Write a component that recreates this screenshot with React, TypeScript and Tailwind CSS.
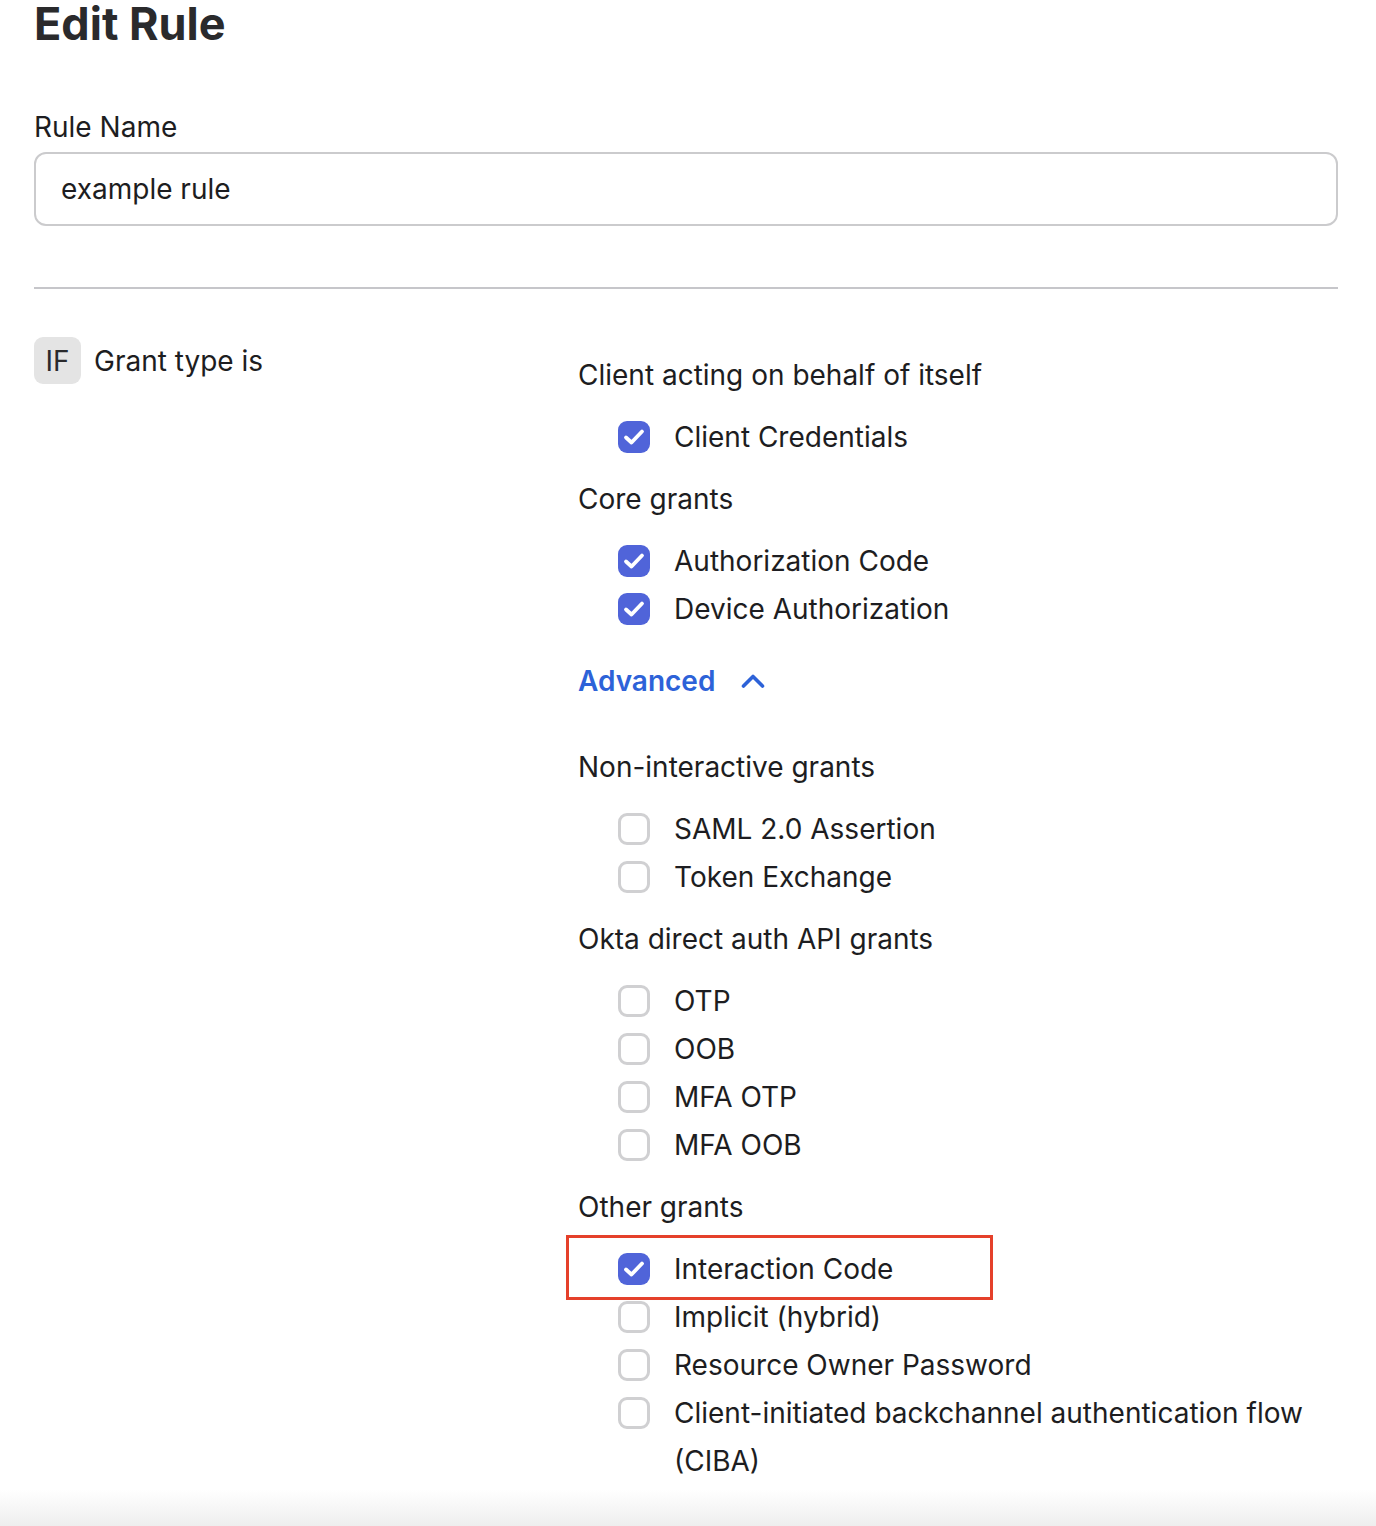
import type { ReactNode } from "react";

type Grant = { label: string; checked?: boolean; highlight?: boolean };

const groupsTop: { title: string; grants: Grant[] }[] = [
  {
    title: "Client acting on behalf of itself",
    grants: [{ label: "Client Credentials", checked: true }],
  },
  {
    title: "Core grants",
    grants: [
      { label: "Authorization Code", checked: true },
      { label: "Device Authorization", checked: true },
    ],
  },
];

const groupsAdvanced: { title: string; grants: Grant[] }[] = [
  {
    title: "Non-interactive grants",
    grants: [{ label: "SAML 2.0 Assertion" }, { label: "Token Exchange" }],
  },
  {
    title: "Okta direct auth API grants",
    grants: [
      { label: "OTP" },
      { label: "OOB" },
      { label: "MFA OTP" },
      { label: "MFA OOB" },
    ],
  },
  {
    title: "Other grants",
    grants: [
      { label: "Interaction Code", checked: true, highlight: true },
      { label: "Implicit (hybrid)" },
      { label: "Resource Owner Password" },
      { label: "Client-initiated backchannel authentication flow (CIBA)" },
    ],
  },
];

function Checkbox({ checked }: { checked?: boolean }) {
  if (checked) {
    return (
      <span className="flex h-[32px] w-[32px] shrink-0 items-center justify-center rounded-[9px] bg-[#5064d9]">
        <svg width="22" height="18" viewBox="0 0 22 18" fill="none" className="-mt-[1px]">
          <path
            d="M3 9.5 L8.5 14.5 L19 3.5"
            stroke="white"
            strokeWidth="3.8"
            strokeLinecap="round"
            strokeLinejoin="round"
          />
        </svg>
      </span>
    );
  }
  return (
    <span className="block h-[32px] w-[32px] shrink-0 rounded-[9px] border-[3px] border-[#d0d0d2] bg-white" />
  );
}

function GrantRow({ grant }: { grant: Grant }) {
  return (
    <div className="relative flex items-start pl-[40px]">
      <div className="flex h-[48px] items-center">
        <Checkbox checked={grant.checked} />
      </div>
      <span className="ml-[24px] leading-[48px]">{grant.label}</span>
      {grant.highlight && (
        <div className="pointer-events-none absolute left-[-12px] top-[-10px] h-[65px] w-[427px] border-[3px] border-[#e5402a]" />
      )}
    </div>
  );
}

function Group({ title, children }: { title: string; children: ReactNode }) {
  return (
    <div className="flex flex-col">
      <p className="mb-[14px] leading-[48px]">{title}</p>
      {children}
    </div>
  );
}

export default function App() {
  return (
    <div className="min-h-[1526px] bg-white font-['Inter',sans-serif] text-[28px] text-[#1d1d21]">
      <div className="px-[34px] pr-[38px]">
        <h1 className="text-[45px] font-bold leading-[48px] text-[#2a2a2c]">Edit Rule</h1>

        <label className="mt-[59px] block leading-[40px]">Rule Name</label>
        <div className="mt-[5px] flex h-[74px] items-center rounded-[12px] border-2 border-[#cbcbcd] px-[25px]">
          example rule
        </div>

        <div className="mt-[61px] h-[2px] bg-[#c6c6ca]" />

        <div className="mt-[48px] grid grid-cols-[544px_1fr]">
          <div className="flex items-center gap-[13px] self-start">
            <span className="flex h-[47px] w-[47px] items-center justify-center rounded-[9px] bg-[#e4e4e4] text-[#2a2a2c]">
              IF
            </span>
            <span>Grant type is</span>
          </div>

          <div className="flex flex-col gap-[14px] pt-[14px]">
            {groupsTop.map((g) => (
              <Group key={g.title} title={g.title}>
                {g.grants.map((gr) => (
                  <GrantRow key={gr.label} grant={gr} />
                ))}
              </Group>
            ))}

            <button className="mt-[10px] flex h-[48px] items-center gap-[26px] self-start font-semibold text-[#2d62d8]">
              Advanced
              <svg width="24" height="16" viewBox="0 0 24 16" fill="none">
                <path
                  d="M2.5 13 L12 3.5 L21.5 13"
                  stroke="#2d62d8"
                  strokeWidth="3.6"
                  strokeLinecap="round"
                  strokeLinejoin="round"
                />
              </svg>
            </button>

            <div className="mt-[24px] flex flex-col gap-[14px]">
              {groupsAdvanced.map((g) => (
                <Group key={g.title} title={g.title}>
                  {g.grants.map((gr) => (
                    <GrantRow key={gr.label} grant={gr} />
                  ))}
                </Group>
              ))}
            </div>
          </div>
        </div>
      </div>
      <div className="mt-[5px] h-[36px] bg-gradient-to-b from-white to-[#eeeeee]" />
    </div>
  );
}
